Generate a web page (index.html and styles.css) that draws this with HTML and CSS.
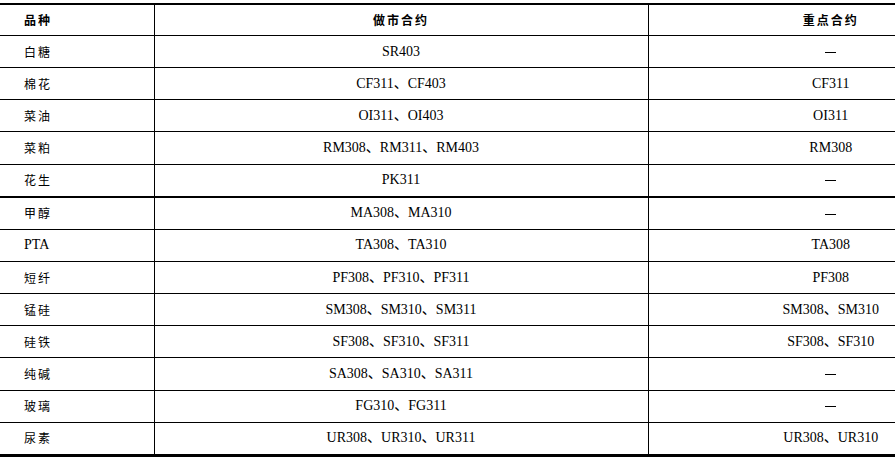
FILE: index.html
```html
<!DOCTYPE html>
<html lang="zh">
<head>
<meta charset="utf-8">
<link rel="stylesheet" href="styles.css">
</head>
<body>
<table class="tbl">
  <colgroup>
    <col class="c1">
    <col class="c2">
    <col class="c3">
  </colgroup>
  <thead>
    <tr><th class="name">品种</th><th>做市合约</th><th class="key">重点合约</th></tr>
  </thead>
  <tbody>
    <tr><td class="name">白糖</td><td>SR403</td><td class="key"><span class="dash">—</span></td></tr>
    <tr><td class="name">棉花</td><td>CF311、CF403</td><td class="key">CF311</td></tr>
    <tr><td class="name">菜油</td><td>OI311、OI403</td><td class="key">OI311</td></tr>
    <tr><td class="name">菜粕</td><td>RM308、RM311、RM403</td><td class="key">RM308</td></tr>
    <tr class="sep"><td class="name">花生</td><td>PK311</td><td class="key"><span class="dash">—</span></td></tr>
    <tr><td class="name">甲醇</td><td>MA308、MA310</td><td class="key"><span class="dash">—</span></td></tr>
    <tr><td class="name lat">PTA</td><td>TA308、TA310</td><td class="key">TA308</td></tr>
    <tr><td class="name">短纤</td><td>PF308、PF310、PF311</td><td class="key">PF308</td></tr>
    <tr><td class="name">锰硅</td><td>SM308、SM310、SM311</td><td class="key">SM308、SM310</td></tr>
    <tr><td class="name">硅铁</td><td>SF308、SF310、SF311</td><td class="key">SF308、SF310</td></tr>
    <tr><td class="name">纯碱</td><td>SA308、SA310、SA311</td><td class="key"><span class="dash">—</span></td></tr>
    <tr><td class="name">玻璃</td><td>FG310、FG311</td><td class="key"><span class="dash">—</span></td></tr>
    <tr><td class="name">尿素</td><td>UR308、UR310、UR311</td><td class="key">UR308、UR310</td></tr>
  </tbody>
</table>
</body>
</html>
```
FILE: styles.css
```css
html, body {
  margin: 0;
  padding: 0;
  background: #fff;
}
body {
  padding-top: 3px;
}
.tbl {
  border-collapse: collapse;
  table-layout: fixed;
  width: 895px;
  font-family: "Liberation Serif", "Noto Sans CJK SC", serif;
  font-size: 14px;
  color: #000;
  border-top: 2px solid #000;
  border-bottom: 3px solid #000;
}
.c1 { width: 154px; }
.c2 { width: 494px; }
.c3 { width: 247px; }
.tbl th,
.tbl td {
  border-bottom: 1px solid #000;
  border-left: 1px solid #000;
  text-align: center;
  vertical-align: middle;
  padding: 0;
  line-height: 16px;
  white-space: nowrap;
}
.tbl th {
  height: 30px;
  font-family: "Noto Sans CJK SC", sans-serif;
  font-weight: bold;
  font-size: 12px;
  letter-spacing: 2px;
}
.tbl td {
  height: 31.15px;
}
.tbl th.key,
.tbl td.key {
  padding-left: 118px;
}
.tbl th.name,
.tbl td.name {
  border-left: none;
  text-align: left;
  padding-left: 24px;
}
.tbl td.name {
  font-family: "Noto Sans CJK SC", sans-serif;
  font-size: 12px;
  letter-spacing: 2px;
}
.tbl td.name.lat {
  font-family: "Liberation Serif", serif;
  font-size: 14px;
  letter-spacing: 0;
}
.dash {
  display: inline-block;
  width: 11px;
  height: 1px;
  background: #000;
  vertical-align: middle;
  overflow: hidden;
  color: transparent;
  font-size: 1px;
  line-height: 1px;
}
.tbl tr.sep td {
  border-bottom: 2px solid #000;
}
.tbl tbody tr:last-child td {
  border-bottom: 3px solid #000;
}
```
